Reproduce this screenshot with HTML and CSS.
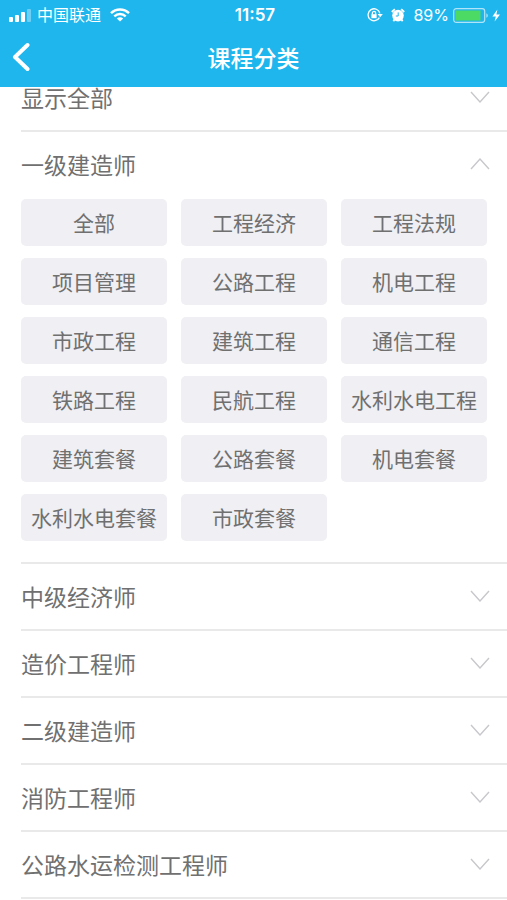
FILE: index.html
```
<!DOCTYPE html>
<html lang="zh-CN">

<head>
    <meta charset="utf-8">
    <meta name="viewport" content="width=device-width, initial-scale=1.0">
    <title>课程分类</title>
    <link rel="stylesheet" href="styles.css">
</head>

<body>
    <header class="header">
        <div class="status">
            <div class="status-left">
                <svg class="signal" width="23" height="13" viewBox="0 0 23 13" fill="#fff">
                    <rect x="0" y="8" width="4" height="5" rx="1" />
                    <rect x="6" y="6" width="4" height="7" rx="1" />
                    <rect x="12" y="3" width="4" height="10" rx="1" />
                    <rect x="18" y="0" width="4" height="13" rx="1" opacity=".35" />
                </svg>
                <span>中国联通</span>
                <svg class="wifi" width="20" height="14" viewBox="0 0 20 14" fill="none" stroke="#fff" stroke-width="2.4">
                    <path d="M1 5.2C6 .2 14 .2 19 5.2" />
                    <path d="M4.3 8.4C7.6 5.2 12.4 5.2 15.7 8.4" />
                    <path d="M10 13.6L6.8 10.4C8.6 8.8 11.4 8.8 13.2 10.4Z" fill="#fff" stroke="none" />
                </svg>
            </div>
            <span class="time">11:57</span>
            <div class="status-right">
                <svg width="16" height="14" viewBox="0 0 16 14" fill="none" stroke="#fff" stroke-width="1.3">
                    <path d="M12.4 9.6A6 6 0 1 1 12.9 5.3" />
                    <path d="M10.6 6H15.8L13.2 9.2Z" fill="#fff" stroke="none" />
                    <rect x="4.4" y="6.2" width="5.2" height="4" fill="#fff" stroke="none" />
                    <path d="M5.4 6.4V5A1.6 1.6 0 0 1 8.6 5V6.4" />
                </svg>
                <svg class="alarm" width="14" height="14" viewBox="0 0 14 14">
                    <circle cx="7" cy="7.6" r="5.8" fill="#fff" />
                    <path d="M.8 4L3.8 1.2M13.2 4L10.2 1.2M3.4 11.5L2.4 13.2M10.6 11.5L11.6 13.2" stroke="#fff" stroke-width="1.8" />
                    <path d="M7.2 4.4V8H4.8" fill="none" stroke="#1fb6ed" stroke-width="1" />
                </svg>
                <span>89%</span>
                <svg class="battery" width="48" height="15" viewBox="0 0 48 15">
                    <rect x=".7" y=".7" width="31" height="13.6" rx="2.5" fill="none" stroke="#fff" stroke-opacity=".65" stroke-width="1.2" />
                    <rect x="2.5" y="2.5" width="25" height="10" fill="#4cd964" />
                    <path d="M33.4 5.2C35.3 6 35.3 9 33.4 9.8Z" fill="#fff" opacity=".65" />
                    <path d="M44.4 1.4L39.4 8.4H42.8L41.6 13.6L47 6.6H43.4Z" fill="#fff" />
                </svg>
            </div>
        </div>
        <div class="nav">
            <button class="back" aria-label="返回">
                <svg width="18" height="30" viewBox="0 0 18 30" fill="none" stroke="#fff" stroke-width="4" stroke-linecap="round" stroke-linejoin="round">
                    <path d="M15.5 3L3 15L15.5 27" />
                </svg>
            </button>
            <h1>课程分类</h1>
        </div>
    </header>

    <main class="list">
        <section class="group">
            <button class="title" aria-expanded="false">显示全部 <svg class="arrow" viewBox="0 0 20 12"><path d="M1 1L10 11L19 1" /></svg></button>
        </section>
        <section class="group">
            <button class="title" aria-expanded="true">一级建造师 <svg class="arrow" viewBox="0 0 20 12"><path d="M1 1L10 11L19 1" /></svg></button>
            <div class="courses">
                <button>全部</button>
                <button>工程经济</button>
                <button>工程法规</button>
                <button>项目管理</button>
                <button>公路工程</button>
                <button>机电工程</button>
                <button>市政工程</button>
                <button>建筑工程</button>
                <button>通信工程</button>
                <button>铁路工程</button>
                <button>民航工程</button>
                <button>水利水电工程</button>
                <button>建筑套餐</button>
                <button>公路套餐</button>
                <button>机电套餐</button>
                <button>水利水电套餐</button>
                <button>市政套餐</button>
            </div>
        </section>
        <section class="group">
            <button class="title" aria-expanded="false">中级经济师 <svg class="arrow" viewBox="0 0 20 12"><path d="M1 1L10 11L19 1" /></svg></button>
        </section>
        <section class="group">
            <button class="title" aria-expanded="false">造价工程师 <svg class="arrow" viewBox="0 0 20 12"><path d="M1 1L10 11L19 1" /></svg></button>
        </section>
        <section class="group">
            <button class="title" aria-expanded="false">二级建造师 <svg class="arrow" viewBox="0 0 20 12"><path d="M1 1L10 11L19 1" /></svg></button>
        </section>
        <section class="group">
            <button class="title" aria-expanded="false">消防工程师 <svg class="arrow" viewBox="0 0 20 12"><path d="M1 1L10 11L19 1" /></svg></button>
        </section>
        <section class="group">
            <button class="title" aria-expanded="false">公路水运检测工程师 <svg class="arrow" viewBox="0 0 20 12"><path d="M1 1L10 11L19 1" /></svg></button>
        </section>
    </main>

    <script>
        document.querySelectorAll('.title').forEach(title => {
            title.onclick = () => {
                const open = title.getAttribute('aria-expanded') == 'true'
                title.setAttribute('aria-expanded', !open)
            }
        })
    </script>
</body>

</html>
```
FILE: styles.css
```
* {
    box-sizing: border-box;
}

body {
    margin: 0;
    background: #fff;
    color: #707070;
    font-family: "Noto Sans CJK SC", sans-serif;
}

button {
    border: 0;
    padding: 0;
    background: none;
    color: inherit;
    font-family: inherit;
    cursor: pointer;
}

svg {
    display: block;
    flex: none;
}

.header {
    position: fixed;
    top: 0;
    left: 0;
    right: 0;
    z-index: 1;
    background: #1fb6ed;
    color: #fff;
}

.status {
    display: grid;
    grid-template-columns: 1fr auto 1fr;
    align-items: center;
    height: 30px;
    padding: 0 6px 0 9px;
    font-family: Inter, "Noto Sans CJK SC", sans-serif;
    font-size: 16px;
    line-height: 30px;
}

.status-left,
.status-right {
    display: flex;
    align-items: center;
}

.status-left {
    gap: 5px;
}

.status-right {
    justify-content: flex-end;
    gap: 8px;
}

.wifi {
    margin-left: 4px;
}

.battery {
    margin-left: -4px;
}

.time {
    font-size: 17px;
    font-weight: 600;
}

.nav {
    display: grid;
    grid-template-columns: 48px 1fr 48px;
    align-items: center;
    height: 57px;
    padding-bottom: 3px;
}

.back {
    display: flex;
    align-items: center;
    height: 54px;
    padding-left: 12px;
}

.nav h1 {
    margin: 0;
    font-size: 23px;
    font-weight: 500;
    line-height: 34px;
    text-align: center;
}

.list {
    padding-top: 65px;
}

.group {
    margin-left: 21px;
    border-bottom: 2px solid #e9e9ea;
}

.title {
    display: flex;
    justify-content: space-between;
    align-items: center;
    width: 100%;
    padding: 15px 17px 16px 0;
    font-size: 23px;
    line-height: 34px;
    text-align: left;
}

.arrow {
    width: 20px;
    height: 12px;
    fill: none;
    stroke: #c8c8cc;
    stroke-width: 1.4;
}

.title[aria-expanded="true"] .arrow {
    transform: rotate(180deg);
}

.title[aria-expanded="false"] + .courses {
    display: none;
}

.courses {
    display: grid;
    grid-template-columns: repeat(3, 1fr);
    gap: 12px 14px;
    padding: 2px 20px 21px 0;
}

.courses button {
    height: 47px;
    padding-bottom: 2px;
    border-radius: 5px;
    background: #efeff4;
    font-size: 21px;
    line-height: 30px;
    white-space: nowrap;
}
```
